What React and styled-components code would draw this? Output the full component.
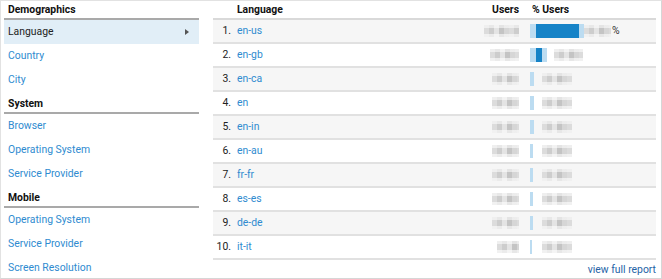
import styled, { createGlobalStyle } from "styled-components";

const GlobalStyle = createGlobalStyle`
  html, body {
    margin: 0;
    padding: 0;
    background: #ffffff;
  }
  body {
    font-family: Roboto, "Liberation Sans", Arial, sans-serif;
    font-size: 10.4px;
    color: #222222;
  }
`;

const sections = [
  {
    title: "Demographics",
    items: ["Language", "Country", "City"],
  },
  {
    title: "System",
    items: ["Browser", "Operating System", "Service Provider"],
  },
  {
    title: "Mobile",
    items: ["Operating System", "Service Provider", "Screen Resolution"],
  },
];

// widths of the blurred blocks and bar segments, per row
const rows = [
  { lang: "en-us", users: 35, light: 6, dark: 43, tail: 5, pct: 27, gap: 0, pctChar: true },
  { lang: "en-gb", users: 29, light: 6, dark: 6, tail: 5, pct: 29, gap: 7 },
  { lang: "en-ca", users: 27, light: 4, dark: 0, tail: 0, pct: 30, gap: 8 },
  { lang: "en", users: 27, light: 4, dark: 0, tail: 0, pct: 30, gap: 8 },
  { lang: "en-in", users: 27, light: 4, dark: 0, tail: 0, pct: 30, gap: 8 },
  { lang: "en-au", users: 27, light: 3, dark: 0, tail: 0, pct: 30, gap: 9 },
  { lang: "fr-fr", users: 27, light: 3, dark: 0, tail: 0, pct: 30, gap: 9 },
  { lang: "es-es", users: 27, light: 3, dark: 0, tail: 0, pct: 30, gap: 9 },
  { lang: "de-de", users: 27, light: 3, dark: 0, tail: 0, pct: 30, gap: 9 },
  { lang: "it-it", users: 22, light: 2, dark: 0, tail: 0, pct: 30, gap: 10 },
];

function App() {
  return (
    <>
      <GlobalStyle />
      <Frame>
        <Sidebar>
          {sections.map((section, i) => (
            <Section key={section.title}>
              <SectionTitle $first={i === 0}>{section.title}</SectionTitle>
              {section.items.map((item) => {
                const active = item === "Language";
                return (
                  <NavItem key={section.title + item} $active={active}>
                    {item}
                    {active && <Caret />}
                  </NavItem>
                );
              })}
            </Section>
          ))}
        </Sidebar>

        <Report>
          <HeadRow>
            <IndexCol />
            <LangCol>Language</LangCol>
            <UsersCol>Users</UsersCol>
            <PctCol $head>% Users</PctCol>
          </HeadRow>
          {rows.map((row, i) => (
            <Row key={row.lang} $odd={i % 2 === 0}>
              <IndexCol>{i + 1}.</IndexCol>
              <LangCol>
                <LangLink href="#">{row.lang}</LangLink>
              </LangCol>
              <UsersCol>
                <Blur style={{ width: row.users }} />
              </UsersCol>
              <PctCol>
                <BarLight style={{ width: row.light }} />
                {row.dark > 0 && <BarDark style={{ width: row.dark }} />}
                {row.tail > 0 && <BarLight style={{ width: row.tail }} />}
                <Blur style={{ width: row.pct, marginLeft: row.gap }} />
                {row.pctChar && <PctChar>%</PctChar>}
              </PctCol>
            </Row>
          ))}
          <Footer>
            <FullReport href="#">view full report</FullReport>
          </Footer>
        </Report>
      </Frame>
    </>
  );
}

const Frame = styled.div`
  box-sizing: border-box;
  width: 662px;
  height: 279px;
  border: 1px solid #e2e2e2;
  border-right-color: #d6d6d6;
  border-bottom-color: #d6d6d6;
  display: flex;
  gap: 14px;
  padding: 0 5px 0 3px;
  overflow: hidden;
`;

const Sidebar = styled.nav`
  width: 195px;
  flex-shrink: 0;
`;

const Section = styled.div`
  display: flex;
  flex-direction: column;
`;

const SectionTitle = styled.div`
  box-sizing: border-box;
  height: ${(p) => (p.$first ? 19 : 22)}px;
  display: flex;
  align-items: flex-end;
  padding: 0 4px 2px;
  font-weight: 700;
  color: #111111;
  border-bottom: 2px solid #a9a9a9;
`;

const NavItem = styled.div`
  position: relative;
  height: 24px;
  line-height: 23px;
  padding: 0 4px;
  color: ${(p) => (p.$active ? "#222222" : "#2f8bd0")};
  background: ${(p) => (p.$active ? "#e1eef7" : "transparent")};
  white-space: nowrap;
`;

const Caret = styled.span`
  position: absolute;
  right: 10px;
  top: 9px;
  width: 0;
  height: 0;
  border-top: 3px solid transparent;
  border-bottom: 3px solid transparent;
  border-left: 4px solid #555555;
`;

const Report = styled.section`
  flex: 1;
  display: flex;
  flex-direction: column;
`;

const HeadRow = styled.div`
  box-sizing: border-box;
  height: 19px;
  display: flex;
  align-items: flex-end;
  padding-bottom: 2px;
  font-weight: 700;
  color: #111111;
  border-bottom: 2px solid #d9d9d9;
`;

const Row = styled.div`
  box-sizing: border-box;
  height: 24px;
  padding-bottom: 1px;
  display: flex;
  align-items: center;
  background: ${(p) => (p.$odd ? "#f6f6f6" : "#ffffff")};
  border-bottom: 2px solid #e1e1e1;
`;

const IndexCol = styled.div`
  width: 18px;
  flex-shrink: 0;
  text-align: right;
  color: #222222;
`;

const LangCol = styled.div`
  flex: 1;
  padding-left: 6px;
  white-space: nowrap;
`;

const UsersCol = styled.div`
  width: 80px;
  display: flex;
  justify-content: flex-end;
  padding-right: 2px;
`;

const PctCol = styled.div`
  width: 135px;
  box-sizing: border-box;
  display: flex;
  align-items: center;
  padding-left: ${(p) => (p.$head ? 11 : 9)}px;
  white-space: nowrap;
`;

const LangLink = styled.a`
  color: #2f8bd0;
  text-decoration: none;
`;

const Blur = styled.span`
  display: inline-block;
  height: 12px;
  background:
    linear-gradient(
      180deg,
      rgba(255, 255, 255, 0.55) 0 3px,
      rgba(255, 255, 255, 0) 3px 9px,
      rgba(255, 255, 255, 0.6) 9px 12px
    ),
    repeating-linear-gradient(
      90deg,
      #dcdcdc 0 5px,
      #cdcdcd 5px 10px,
      #e4e4e4 10px 15px,
      #c4c4c4 15px 20px,
      #d6d6d6 20px 25px
    );
`;

const BarLight = styled.span`
  display: inline-block;
  height: 14px;
  background: #bcdcf1;
`;

const BarDark = styled.span`
  display: inline-block;
  height: 14px;
  background: #1683c7;
`;

const PctChar = styled.span`
  margin-left: 1px;
  color: #333333;
`;

const Footer = styled.div`
  display: flex;
  justify-content: flex-end;
  padding-top: 3px;
`;

const FullReport = styled.a`
  color: #2563a6;
  text-decoration: none;
`;

export default App;
